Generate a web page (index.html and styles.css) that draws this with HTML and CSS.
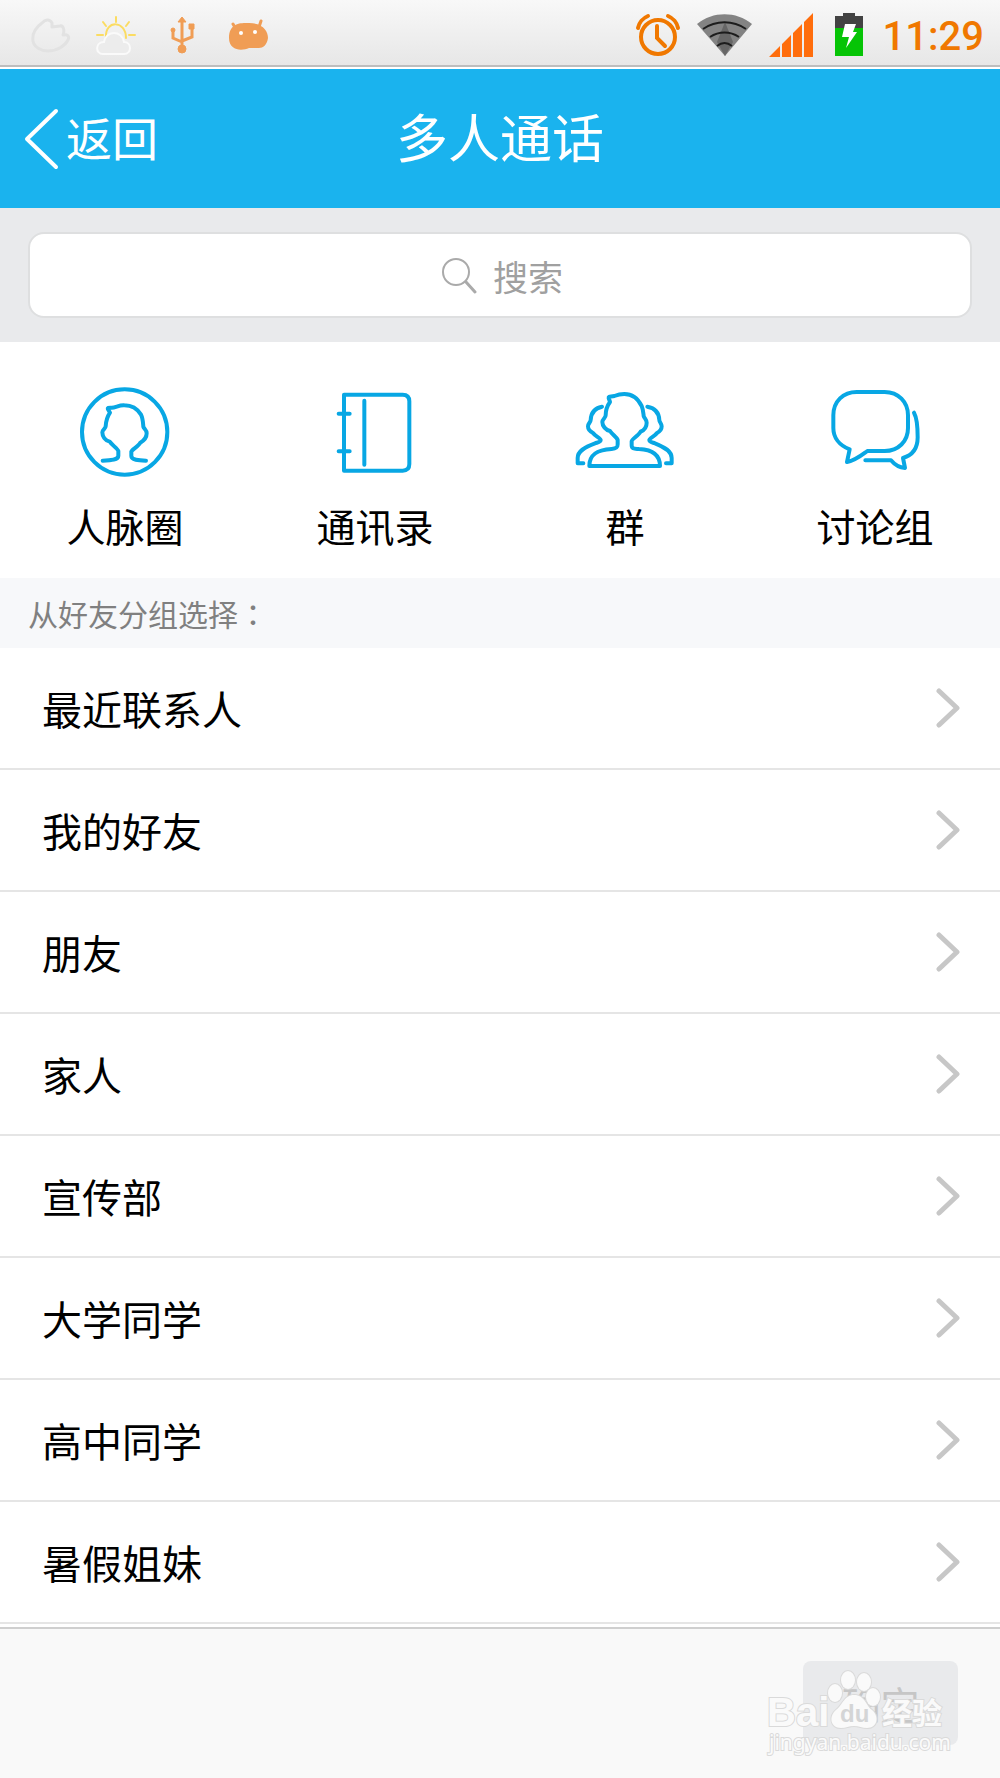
FILE: index.html
```html
<!DOCTYPE html>
<html lang="zh-CN">

<head>
    <meta charset="UTF-8">
    <meta name="viewport" content="width=device-width, initial-scale=1.0">
    <title>多人通话</title>
    <link rel="stylesheet" href="styles.css">
</head>

<body>
    <!-- 状态栏 -->
    <div class="status">
        <div class="status_left">
            <svg width="42" height="42" viewBox="0 0 42 42" fill="none" stroke="#e2e2e2" stroke-width="3" stroke-linejoin="round">
                <path d="M23 9C20 4 16 6 13 9C6 14 3 20 4 27C5 33 12 37 19 37C28 37 36 32 39 26C41 22 38 20 34 21C36 16 34 11 31 12L23 13Z" />
            </svg>
            <svg width="42" height="42" viewBox="0 0 42 42" fill="none" stroke-width="2" stroke-linecap="round">
                <path d="M11 23C10 6 31 6 31 24M21 3V8M8 8L11 12M34 8L31 12M2 21H8M34 21H40" stroke="#fbdc62" />
                <path d="M8 40C0 40 0 28 9 28C11 16 27 16 29 28C37 28 37 40 29 40Z" stroke="#fafafa" fill="#ececec" />
            </svg>
            <svg width="42" height="42" viewBox="0 0 42 42" fill="#f09d55" stroke="#f09d55">
                <path d="M21 35V7M21 28L12 24V16M21 27L31 23V14" fill="none" stroke-width="3" />
                <path d="M21 3L25 8H17Z" />
                <circle cx="21" cy="35" r="4" />
                <circle cx="12" cy="16" r="2" />
                <path d="M28 10h5v5h-5z" />
            </svg>
            <svg width="42" height="42" viewBox="0 0 42 42">
                <path d="M2 24C2 8 15 9 22 9C36 9 41 17 41 24C40 31 36 34 32 34H22C15 37 2 37 2 24Z" fill="#f09d55" />
                <path d="M6 10L9 15M34 7L32 13" stroke="#f09d55" stroke-width="3" stroke-linecap="round" />
                <circle cx="14" cy="19" r="2" fill="#fff" />
                <circle cx="28" cy="18" r="2" fill="#fff" />
            </svg>
        </div>
        <div class="status_right">
            <svg width="46" height="46" viewBox="0 0 46 46" fill="none" stroke="#f07800" stroke-width="4" stroke-linecap="round">
                <circle cx="23" cy="25" r="17" />
                <path d="M22 14V26L30 34M3 16C4 11 8 6 13 4M43 16C42 11 38 6 33 4" />
            </svg>
            <svg width="56" height="46" viewBox="0 0 56 46">
                <path d="M0 12C16 -1 39 -1 55 12L28 44Z" fill="#838383" />
                <path d="M28 10L36 30L28 44L20 30Z" fill="#666" />
                <path d="M6 17C19 8 36 8 49 17M13 25C22 19 33 19 42 25M20 34C25 30 30 30 35 34" fill="none" stroke="#1c1c1c" stroke-width="2" />
            </svg>
            <svg width="46" height="46" viewBox="0 0 46 46" fill="#ff6d0c">
                <path d="M0 45L11 34V45ZM13 45V32L22 23V45ZM24 45V21L33 12V45ZM35 45V10L44 1V45Z" />
            </svg>
            <svg width="36" height="46" viewBox="0 0 36 46">
                <path d="M4 4H12V1H24V4H32V17H4Z" fill="#424242" />
                <path d="M4 16H32V44H4Z" fill="#06c406" />
                <path d="M14 12H25L22 20H26L15 36L18 25H11Z" fill="#fff" />
            </svg>
            <span class="clock">11:29</span>
        </div>
    </div>

    <!-- 标题栏 -->
    <div class="header">
        <a class="back" href="#">
            <svg width="35" height="62" viewBox="0 0 35 62" fill="none" stroke="#fff" stroke-width="4" stroke-linecap="round" stroke-linejoin="round">
                <path d="M32 3L3 31L32 59" />
            </svg>
            <span>返回</span>
        </a>
        <h1>多人通话</h1>
    </div>

    <!-- 搜索 -->
    <div class="search">
        <label class="search_box">
            <svg width="36" height="38" viewBox="0 0 36 38" fill="none" stroke="#aaa" stroke-width="2" stroke-linecap="round">
                <circle cx="15" cy="16" r="13" />
                <path d="M25 26L34 36" stroke-width="3" />
            </svg>
            <input type="text" placeholder="搜索" aria-label="搜索">
        </label>
    </div>

    <!-- 快捷入口 -->
    <div class="entry">
        <a href="#">
            <svg viewBox="0 0 300 300">
                <circle cx="149" cy="150" r="128" />
                <path d="M83 236C110 235 130 234 130 221V207C128 200 110 188 104 179C90 176 82 163 82 151C82 143 92 140 92 133C93 116 96 105 105 92L99 82C97 76 102 77 110 77C122 77 132 69 148 70C172 70 188 82 198 98C204 110 204 122 205 134C207 141 215 144 215 154C215 166 207 176 196 182C190 194 171 202 169 209V222C169 234 190 235 213 236" />
            </svg>
            <span>人脉圈</span>
        </a>
        <a href="#">
            <svg viewBox="0 0 300 300">
                <path d="M57 38H233Q253 38 253 58V246Q253 266 233 266H57ZM118 56V248M41 95H74M41 208H74" />
            </svg>
            <span>通讯录</span>
        </a>
        <a href="#">
            <svg viewBox="0 0 300 300">
                <path d="M43 252C43 215 70 203 110 201C126 200 128 195 128 187V174C126 166 112 158 105 147C92 144 82 132 82 120C82 111 92 108 92 100C92 85 96 72 105 60L101 48C100 42 108 45 118 42C128 38 138 36 148 36C172 36 190 52 200 72C205 84 205 92 206 102C208 109 215 112 215 122C215 134 208 144 197 149C190 162 170 171 170 178V190C170 202 180 200 192 201C232 203 255 217 255 252Z" />
                <path d="M81 74C60 78 48 92 47 114C47 121 39 124 39 133C39 143 46 149 54 153C62 164 77 168 77 174C77 180 68 181 60 184C28 196 8 208 8 228V244H25" />
                <path d="M217 74C240 78 252 92 253 114C253 121 260 124 260 133C260 143 254 149 246 153C238 164 223 168 223 174C223 180 232 181 240 184C270 196 290 208 290 228V244H273" />
            </svg>
            <span>群</span>
        </a>
        <a href="#">
            <svg viewBox="0 0 300 300">
                <path d="M74 202C42 190 25 166 25 138V100C25 58 55 30 95 30H179C220 30 249 60 249 100V138C249 178 220 207 179 207H127C108 221 92 235 66 240Z" />
                <path d="M267 92C276 108 278 125 278 166C278 200 262 220 234 228L240 258C222 257 208 247 198 235H121" />
            </svg>
            <span>讨论组</span>
        </a>
    </div>

    <!-- 好友分组 -->
    <h2 class="group_title">从好友分组选择<span class="colon" lang="zh-TW">：</span></h2>
    <ul class="group">
        <li><a href="#">最近联系人<svg class="arrow" viewBox="0 0 24 42"><path d="M3 4L21 21L3 38" /></svg></a></li>
        <li><a href="#">我的好友<svg class="arrow" viewBox="0 0 24 42"><path d="M3 4L21 21L3 38" /></svg></a></li>
        <li><a href="#">朋友<svg class="arrow" viewBox="0 0 24 42"><path d="M3 4L21 21L3 38" /></svg></a></li>
        <li><a href="#">家人<svg class="arrow" viewBox="0 0 24 42"><path d="M3 4L21 21L3 38" /></svg></a></li>
        <li><a href="#">宣传部<svg class="arrow" viewBox="0 0 24 42"><path d="M3 4L21 21L3 38" /></svg></a></li>
        <li><a href="#">大学同学<svg class="arrow" viewBox="0 0 24 42"><path d="M3 4L21 21L3 38" /></svg></a></li>
        <li><a href="#">高中同学<svg class="arrow" viewBox="0 0 24 42"><path d="M3 4L21 21L3 38" /></svg></a></li>
        <li><a href="#">暑假姐妹<svg class="arrow" viewBox="0 0 24 42"><path d="M3 4L21 21L3 38" /></svg></a></li>
    </ul>

    <!-- 底部 -->
    <div class="footer">
        <button type="button" disabled>确定</button>
        <!-- 水印 -->
        <svg class="mark" width="186" height="92" viewBox="0 0 186 92">
            <text class="mark_bai" x="2" y="58">Bai</text>
            <ellipse cx="70" cy="25" rx="7" ry="9" />
            <ellipse cx="83" cy="12" rx="7" ry="9" />
            <ellipse cx="99" cy="14" rx="7" ry="9" />
            <ellipse cx="108" cy="29" rx="7" ry="9" />
            <path d="M89 27C100 27 101 38 107 42C115 49 112 60 102 60C97 60 94 58 89 58C84 58 81 60 76 60C66 60 63 49 71 42C78 37 79 27 89 27Z" />
            <text class="mark_du" x="75" y="54">du</text>
            <text class="mark_cn" x="117" y="56">经验</text>
            <text class="mark_url" x="4" y="82">jingyan.baidu.com</text>
        </svg>
    </div>
</body>

</html>
```
FILE: styles.css
```css
* {
    box-sizing: border-box;
}

body {
    margin: 0;
    background-color: #fff;
    color: #000;
    font-family: "Noto Sans CJK SC", sans-serif;
}

a {
    color: inherit;
    text-decoration: none;
}

svg {
    display: block;
    flex-shrink: 0;
}

/* 状态栏 */
.status {
    height: 67px;
    padding: 4px 16px 0 29px;
    border-bottom: 2px solid #bdbdbd;
    background: linear-gradient(#f8f8f8, #e7e7e7);
    display: flex;
    justify-content: space-between;
    align-items: center;
}

.status_left {
    display: flex;
    gap: 24px;
}

.status_right {
    display: flex;
    align-items: center;
    gap: 16px;
}

.clock {
    padding-top: 4px;
    color: #f07800;
    font: 500 40px/46px Roboto, sans-serif;
}

/* 标题栏 */
.header {
    height: 139px;
    margin-top: 2px;
    padding: 0 24px;
    background-color: #1ab3ee;
    color: #fff;
    display: grid;
    grid-template-columns: 1fr auto 1fr;
    align-items: center;
}

.back {
    display: flex;
    align-items: center;
    gap: 7px;
    font-size: 46px;
    line-height: 60px;
}

.back span,
.header h1 {
    padding-bottom: 6px;
}

.header h1 {
    margin: 0;
    font-size: 52px;
    font-weight: 400;
    line-height: 60px;
}

/* 搜索 */
.search {
    padding: 24px 28px;
    background-color: #e9eaec;
}

.search_box {
    height: 86px;
    padding-left: 4px;
    border: 2px solid #dedfe0;
    border-radius: 16px;
    background-color: #fff;
    display: flex;
    justify-content: center;
    align-items: center;
    gap: 16px;
}

.search_box input {
    width: 70px;
    height: 50px;
    padding: 0;
    border: 0;
    outline: 0;
    background: none;
    font-family: inherit;
    font-size: 35px;
}

.search_box input::placeholder {
    color: #a0a0a0;
    opacity: 1;
}

/* 快捷入口 */
.entry {
    padding: 40px 0 23px;
    display: grid;
    grid-template-columns: repeat(4, 1fr);
}

.entry a {
    display: flex;
    flex-direction: column;
    align-items: center;
    gap: 13px;
    font-size: 39px;
    line-height: 60px;
}

.entry svg {
    width: 100px;
    height: 100px;
    fill: none;
    stroke: #08a7e4;
    stroke-width: 12;
    stroke-linecap: round;
    stroke-linejoin: round;
}

/* 好友分组 */
.group_title {
    margin: 0;
    padding: 0 28px;
    background-color: #f7f8fa;
    color: #808080;
    font-size: 30px;
    font-weight: 400;
    line-height: 70px;
}

.colon {
    font-family: "Noto Sans CJK TC", sans-serif;
}

.group {
    margin: 0;
    padding: 0;
    list-style: none;
}

.group li {
    border-bottom: 2px solid #e5e5e5;
}

.group a {
    height: 120px;
    padding: 0 40px 0 42px;
    display: flex;
    justify-content: space-between;
    align-items: center;
    font-size: 40px;
}

.arrow {
    width: 24px;
    height: 42px;
    fill: none;
    stroke: #c7c7c7;
    stroke-width: 5;
    stroke-linecap: round;
    stroke-linejoin: round;
}

/* 底部 */
.footer {
    margin-top: 3px;
    padding: 32px 42px 33px;
    border-top: 2px solid #cfcfcf;
    background-color: #f9f9f9;
    display: flex;
    justify-content: flex-end;
    position: relative;
}

.footer button {
    width: 155px;
    height: 84px;
    padding: 0;
    border: 0;
    border-radius: 8px;
    background-color: #e9eaec;
    color: #c6c6c6;
    font-family: inherit;
    font-size: 39px;
}

.mark {
    position: absolute;
    right: 49px;
    bottom: 18px;
    fill: #fafafa;
    stroke: #dadada;
    stroke-width: 2;
    paint-order: stroke;
}

.mark_bai {
    font: 700 40px "Liberation Sans", sans-serif;
}

.mark_du {
    fill: #d4d5d6;
    stroke: none;
    font: 700 24px "Liberation Sans", sans-serif;
}

.mark_cn {
    font: 700 30px "Noto Sans CJK SC", sans-serif;
}

.mark_url {
    font: 400 21px "Noto Sans", sans-serif;
}
```
